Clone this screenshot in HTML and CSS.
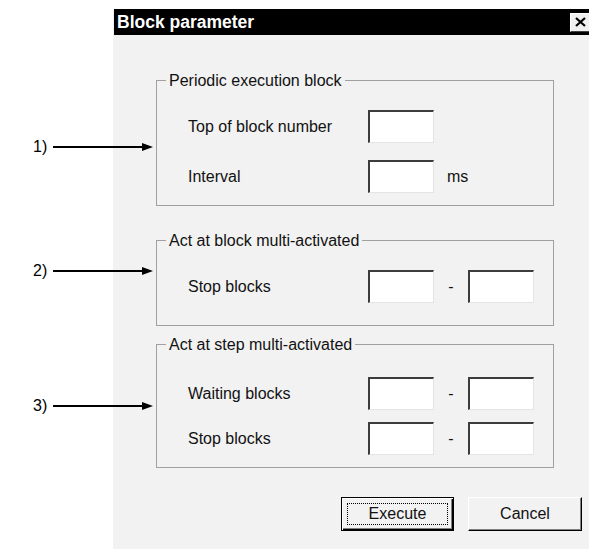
FILE: index.html
```html
<!DOCTYPE html>
<html lang="en">
<head>
    <meta charset="UTF-8">
    <title>Block parameter</title>
    <link rel="stylesheet" href="styles.css">
</head>
<body>
    <div class="dialog">
        <div class="titlebar">
            <span class="title">Block parameter</span>
            <span class="close">
                <svg width="11" height="10" viewBox="0 0 11 10"><path d="M1 1 L10 9 M10 1 L1 9" stroke="#000" stroke-width="2.2" fill="none"/></svg>
            </span>
        </div>
        <div class="dialog-body">
            <div class="group">
                <div class="callout callout-1">
                    <span>1)</span>
                    <svg width="100" height="10" viewBox="0 0 100 10"><line x1="0" y1="5" x2="92" y2="5" stroke="#000" stroke-width="2"/><polygon points="89,1 100,5 89,9" fill="#000"/></svg>
                </div>
                <fieldset class="box-1">
                    <legend>Periodic execution block</legend>
                    <div class="row">
                        <span class="label">Top of block number</span>
                        <span class="field"></span>
                    </div>
                    <div class="row">
                        <span class="label">Interval</span>
                        <span class="field"></span>
                        <span class="unit">ms</span>
                    </div>
                </fieldset>
            </div>

            <div class="group group-2">
                <div class="callout callout-2">
                    <span>2)</span>
                    <svg width="100" height="10" viewBox="0 0 100 10"><line x1="0" y1="5" x2="92" y2="5" stroke="#000" stroke-width="2"/><polygon points="89,1 100,5 89,9" fill="#000"/></svg>
                </div>
                <fieldset class="box-2">
                    <legend>Act at block multi-activated</legend>
                    <div class="row">
                        <span class="label">Stop blocks</span>
                        <span class="field"></span>
                        <span class="dash">-</span>
                        <span class="field"></span>
                    </div>
                </fieldset>
            </div>

            <div class="group group-3">
                <div class="callout callout-3">
                    <span>3)</span>
                    <svg width="100" height="10" viewBox="0 0 100 10"><line x1="0" y1="5" x2="92" y2="5" stroke="#000" stroke-width="2"/><polygon points="89,1 100,5 89,9" fill="#000"/></svg>
                </div>
                <fieldset class="box-3">
                    <legend>Act at step multi-activated</legend>
                    <div class="row">
                        <span class="label">Waiting blocks</span>
                        <span class="field"></span>
                        <span class="dash">-</span>
                        <span class="field"></span>
                    </div>
                    <div class="row row-tight">
                        <span class="label">Stop blocks</span>
                        <span class="field"></span>
                        <span class="dash">-</span>
                        <span class="field"></span>
                    </div>
                </fieldset>
            </div>

            <div class="buttons">
                <button class="btn btn-default"><span class="focus">Execute</span></button>
                <button class="btn btn-cancel">Cancel</button>
            </div>
        </div>
    </div>
</body>
</html>
```

FILE: styles.css
```css
html, body {
    margin: 0;
    padding: 0;
    overflow: hidden;
    background-color: #fff;
}

body {
    font-family: "Liberation Sans", Arial, sans-serif;
    font-size: 16px;
    color: #111;
}

.dialog {
    margin: 9px 0 0 113px;
    width: 480px;
    height: 540px;
    background-color: #f2f2f2;
}

.titlebar {
    margin-left: 1px;
    height: 26px;
    background-color: #000;
    display: flex;
    align-items: center;
    justify-content: space-between;
}

.title {
    color: #fff;
    font-weight: bold;
    font-size: 17.5px;
    padding-left: 3px;
}

.close {
    width: 21px;
    height: 19px;
    margin-right: 2px;
    box-sizing: border-box;
    background-color: #f0f0f0;
    border: 1px solid;
    border-color: #fff #404040 #404040 #fff;
    display: flex;
    align-items: center;
    justify-content: center;
}

.dialog-body {
    padding: 36px 0 0 43px;
}

.group {
    position: relative;
    width: 398px;
}

.group-2 {
    margin-top: 25px;
}

.group-3 {
    margin-top: 9px;
}

fieldset {
    margin: 0;
    padding: 20px 9px 12px;
    border: 1px solid #a0a0a0;
    min-width: 0;
}

.box-2 {
    padding-bottom: 22px;
}

.box-3 {
    padding-top: 23px;
}

legend {
    padding: 0 3px;
    line-height: 19px;
}

.row {
    display: flex;
    align-items: center;
    height: 33px;
    padding-left: 22px;
}

.row + .row {
    margin-top: 17px;
}

.row-tight + .row, .row + .row-tight {
    margin-top: 12px;
}

.label {
    width: 180px;
}

.field {
    width: 66px;
    height: 33px;
    box-sizing: border-box;
    background-color: #fff;
    border-style: solid;
    border-width: 2px 1px 1px 2px;
    border-color: #3c3c3c #e4e4e4 #e4e4e4 #3c3c3c;
}

.unit {
    margin-left: 13px;
}

.dash {
    width: 34px;
    text-align: center;
}

.callout {
    position: absolute;
    left: -123px;
    height: 18px;
    display: flex;
    align-items: center;
    gap: 6px;
    color: #000;
}

.callout-1 { top: 67px; }
.callout-2 { top: 31px; }
.callout-3 { top: 62px; }

.buttons {
    display: flex;
    gap: 14px;
    margin: 29px 0 0 185px;
}

.btn {
    height: 34px;
    box-sizing: border-box;
    font-family: inherit;
    font-size: 16px;
    color: #111;
    background-color: #f2f2f2;
    padding: 0;
}

.btn-default {
    width: 113px;
    padding: 5px;
    border: 1px solid #000;
    box-shadow: inset 1px 1px 0 #fff, inset -1px -1px 0 #000, inset -2px -2px 0 #808080;
}

.focus {
    display: block;
    height: 22px;
    box-sizing: border-box;
    border: 1px dotted #000;
    line-height: 20px;
}

.btn-cancel {
    width: 114px;
    border: 1px solid;
    border-color: #fff #000 #000 #fff;
    box-shadow: inset -1px -1px 0 #808080;
}
```
